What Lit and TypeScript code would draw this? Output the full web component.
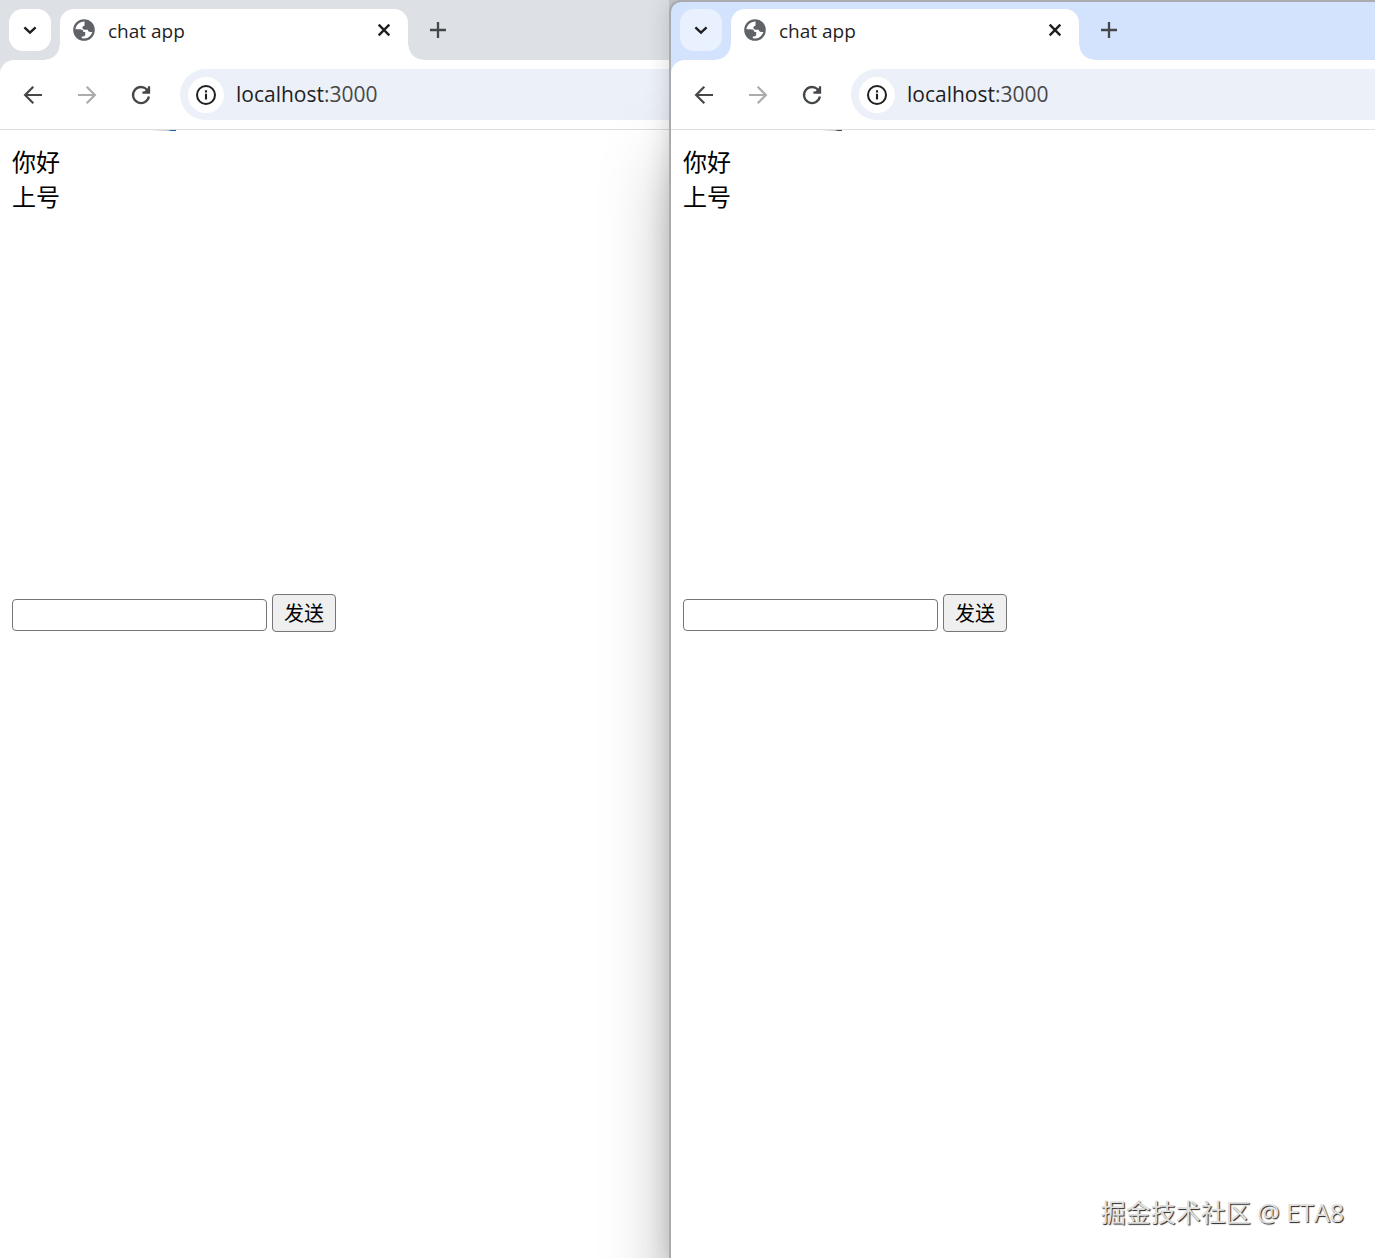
import { LitElement, html, css, svg } from "lit";
import { customElement, property } from "lit/decorators.js";

const icons = {
  chevron: svg`<path d="M6.400 9.300l5.600 5.400 5.600-5.400" fill="none" stroke="currentColor" stroke-width="2.400"/>`,
  globe: svg`<circle cx="12" cy="12" r="9.700" fill="none" stroke="currentColor" stroke-width="2.200"/><path d="M13.500 2.500h3L21.500 8v6h-3.300c-1.500 0-2.400-.9-2.400-2.200h-3c-1.500 0-2.400-.8-2.400-2 0-1.300.9-2.100 2.100-2.100V4.600c0-.9.400-1.600 1-2.100zM2.300 11.200h5.500c2.300 0 3.600 1.100 3.600 2.900h1.800v2.400c0 1.200-.8 1.900-2 1.900H9.800v3.400L5 19.500 2.500 15z" fill="currentColor"/>`,
  close: svg`<path d="M6.200 6.200l11.600 11.600M17.800 6.200L6.200 17.800" fill="none" stroke="currentColor" stroke-width="2.600"/>`,
  plus: svg`<path d="M12 4v16M4 12h16" fill="none" stroke="currentColor" stroke-width="2.300"/>`,
  back: svg`<path d="M21 12H4.500M12.300 3.800L4.100 12l8.200 8.200" fill="none" stroke="currentColor" stroke-width="2.200"/>`,
  forward: svg`<path d="M3 12h16.500M11.700 3.800l8.200 8.200-8.200 8.200" fill="none" stroke="currentColor" stroke-width="2.200"/>`,
  reload: svg`<path d="M18.700 7.600A8 8 0 1 0 19.900 13.500M20 3.200v6.400h-6.600" fill="none" stroke="currentColor" stroke-width="2.300"/><path d="M20 4v5.600h-5.600z" fill="currentColor"/>`,
  info: svg`<circle cx="12" cy="12" r="9" fill="none" stroke="currentColor" stroke-width="2"/><path d="M12 10.800v5.700M12 7.300v2.200" fill="none" stroke="currentColor" stroke-width="2.100"/>`,
};

const icon = (name: keyof typeof icons) =>
  html`<svg viewBox="0 0 24 24" aria-hidden="true">${icons[name]}</svg>`;

@customElement("chat-page")
class ChatPage extends LitElement {
  @property({ attribute: false }) messages: string[] = [];

  static styles = css`
    :host {
      display: block;
      flex: 1;
      background: #fff;
      color: #000;
      font-family: "Noto Sans CJK SC", sans-serif;
    }
    .messages {
      box-sizing: border-box;
      list-style: none;
      margin: 0;
      padding: 12px 12px 0;
      min-height: 463px;
      font-size: 24px;
      line-height: 35px;
    }
    .composer {
      display: flex;
      align-items: flex-end;
      gap: 5px;
      padding: 0 12px;
    }
    .field {
      box-sizing: border-box;
      width: 255px;
      height: 32px;
      margin: 0 0 1px;
      padding: 2px 4px;
      border: 1px solid #767676;
      border-radius: 4px;
      background: #fff;
      font: 20px "Noto Sans CJK SC", sans-serif;
    }
    .send {
      box-sizing: border-box;
      width: 64px;
      height: 38px;
      padding: 0;
      border: 1px solid #767676;
      border-radius: 4px;
      background: #efefef;
      color: #000;
      font: 20px/36px "Noto Sans CJK SC", sans-serif;
    }
  `;

  render() {
    return html`
      <ul class="messages">
        ${this.messages.map((m) => html`<li>${m}</li>`)}
      </ul>
      <form class="composer" @submit=${(e: Event) => e.preventDefault()}>
        <input class="field" type="text" aria-label="消息" />
        <button class="send">发送</button>
      </form>
    `;
  }
}

@customElement("browser-window")
class BrowserWindow extends LitElement {
  @property({ type: Boolean, reflect: true }) active = false;
  @property() title = "";
  @property() host = "";
  @property() port = "";
  @property({ attribute: false }) messages: string[] = [];

  static styles = css`
    :host {
      --strip: #dde1e6;
      --search: #fff;
      --peek: #1f5fae;
      --peek-width: 32px;
      --strip-top: 9px;
      display: flex;
      flex-direction: column;
      min-width: 0;
      box-sizing: border-box;
      background: var(--strip);
      font-family: "Open Sans", "Noto Sans", sans-serif;
    }
    :host([active]) {
      --strip: #d3e3fd;
      --search: #e9f1fe;
      --peek: #444;
      --peek-width: 27px;
      --strip-top: 7px;
      position: relative;
      border: 2px solid #a9abae;
      border-right: 0;
      border-bottom: 0;
      border-radius: 12px 0 0 0;
      box-shadow: 0 0 24px rgba(0, 0, 0, 0.16), 0 150px 76px -10px rgba(0, 0, 0, 0.36);
    }
    button {
      display: grid;
      place-items: center;
      padding: 0;
      border: 0;
      background: none;
      color: #45484b;
    }
    svg {
      display: block;
      width: 24px;
      height: 24px;
    }
    .strip {
      display: flex;
      padding: var(--strip-top) 0 0 9px;
    }
    .search {
      width: 42px;
      height: 42px;
      border-radius: 14px;
      background: var(--search);
      color: #1f1f1f;
    }
    .tab {
      position: relative;
      display: flex;
      align-items: center;
      box-sizing: border-box;
      width: 348px;
      height: 51px;
      margin-left: 9px;
      padding: 0 13px 9px 12px;
      border-radius: 14px 14px 0 0;
      background: #fff;
      color: #1f1f1f;
    }
    .tab::before,
    .tab::after {
      content: "";
      position: absolute;
      bottom: 0;
      width: 15px;
      height: 15px;
    }
    .tab::before {
      right: 100%;
      background: radial-gradient(circle at 0 0, transparent 14px, #fff 15px);
    }
    .tab::after {
      left: 100%;
      background: radial-gradient(circle at 100% 0, transparent 14px, #fff 15px);
    }
    .favicon {
      color: #5f6368;
    }
    .title {
      flex: 1;
      margin-left: 12px;
      padding-top: 2px;
      font-size: 19px;
      line-height: 26px;
    }
    .close {
      color: #1f1f1f;
    }
    .close svg {
      width: 22px;
      height: 22px;
    }
    .new {
      width: 42px;
      height: 42px;
      margin-left: 9px;
    }
    .toolbar {
      display: flex;
      align-items: center;
      height: 69px;
      border-bottom: 1px solid #dedfe1;
      border-radius: 14px 0 0 0;
      background: #fff;
      padding-left: 6px;
    }
    .nav {
      width: 54px;
      height: 54px;
    }
    .nav:disabled {
      color: #aaacae;
    }
    .address {
      display: flex;
      flex: 1;
      align-items: center;
      min-width: 0;
      box-sizing: border-box;
      height: 51px;
      margin-left: 12px;
      padding-left: 8px;
      border-radius: 26px 0 0 26px;
      background: #ebf0f9;
    }
    .info {
      flex: none;
      width: 36px;
      height: 36px;
      border-radius: 50%;
      background: #fff;
      color: #1f1f1f;
    }
    .url {
      margin-left: 12px;
      padding-bottom: 2px;
      color: #474747;
      font-size: 21px;
      line-height: 30px;
      white-space: nowrap;
      text-decoration: none;
    }
    .host {
      color: #1f1f1f;
    }
    .body {
      display: flex;
      flex: 1;
      flex-direction: column;
      background: #fff;
    }
    .peek {
      flex: none;
      width: var(--peek-width);
      height: 1px;
      margin-left: 144px;
      background: linear-gradient(90deg, transparent 20%, #c4c8d0 75%, var(--peek) 85%);
    }
  `;

  render() {
    return html`
      <div class="strip">
        <button class="search" aria-label="搜索标签页">${icon("chevron")}</button>
        <div class="tab">
          <span class="favicon">${icon("globe")}</span>
          <span class="title">${this.title}</span>
          <button class="close" aria-label="关闭">${icon("close")}</button>
        </div>
        <button class="new" aria-label="新标签页">${icon("plus")}</button>
      </div>
      <div class="toolbar">
        <button class="nav" aria-label="后退">${icon("back")}</button>
        <button class="nav" aria-label="前进" disabled>${icon("forward")}</button>
        <button class="nav" aria-label="重新加载">${icon("reload")}</button>
        <div class="address">
          <button class="info" aria-label="网站信息">${icon("info")}</button>
          <a class="url" href="#"><span class="host">${this.host}</span>:${this.port}</a>
        </div>
      </div>
      <div class="body">
        <div class="peek"></div>
        <chat-page .messages=${this.messages}></chat-page>
      </div>
    `;
  }
}

@customElement("app-root")
class AppRoot extends LitElement {
  private messages = ["你好", "上号"];

  static styles = css`
    :host {
      position: relative;
      display: grid;
      grid-template-columns: 669fr 706fr;
      min-height: 100vh;
      overflow: hidden;
      background: #c6cacd;
    }
    .watermark {
      position: absolute;
      right: 31px;
      bottom: 28px;
      color: #e0e0e0;
      font: 25px/36px "Open Sans", "Noto Sans CJK SC", sans-serif;
      text-shadow: 1px 1px 1px #222;
    }
  `;

  render() {
    return html`
      <browser-window title="chat app" .host=${"localhost"} port="3000" .messages=${this.messages}></browser-window>
      <browser-window active title="chat app" .host=${"localhost"} port="3000" .messages=${this.messages}></browser-window>
      <div class="watermark">掘金技术社区 @ ETA8</div>
    `;
  }
}
